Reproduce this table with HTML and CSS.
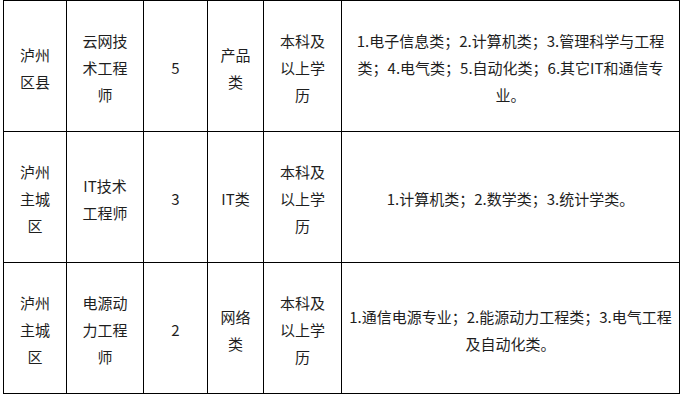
FILE: index.html
```html
<!DOCTYPE html>
<html lang="zh-CN">
<head>
<meta charset="utf-8">
<title>岗位表</title>
<link rel="stylesheet" href="styles.css">
</head>
<body>
<table class="jobs">
  <colgroup>
    <col class="c-area">
    <col class="c-post">
    <col class="c-num">
    <col class="c-type">
    <col class="c-edu">
    <col class="c-major">
  </colgroup>
  <tbody>
    <tr>
      <td class="narrow">泸州区县</td>
      <td class="wide">云网技术工程师</td>
      <td>5</td>
      <td class="narrow">产品类</td>
      <td class="wide">本科及以上学历</td>
      <td class="major">1.电子信息类；2.计算机类；3.管理科学与工程类；4.电气类；5.自动化类；6.其它IT和通信专业。</td>
    </tr>
    <tr>
      <td class="narrow">泸州主城区</td>
      <td class="wide">IT技术工程师</td>
      <td>3</td>
      <td class="narrow">IT类</td>
      <td class="wide">本科及以上学历</td>
      <td class="major">1.计算机类；2.数学类；3.统计学类。</td>
    </tr>
    <tr>
      <td class="narrow">泸州主城区</td>
      <td class="wide">电源动力工程师</td>
      <td>2</td>
      <td class="narrow">网络类</td>
      <td class="wide">本科及以上学历</td>
      <td class="major">1.通信电源专业；2.能源动力工程类；3.电气工程及自动化类。</td>
    </tr>
  </tbody>
</table>
</body>
</html>
```

FILE: styles.css
```css
html, body {
  margin: 0;
  padding: 0;
  background: #ffffff;
}

body {
  padding: 0 0 0 3px;
  font-family: "Noto Sans CJK SC", "Noto Sans", sans-serif;
  font-size: 15px;
  color: #1e1e1e;
}

.jobs {
  border-collapse: collapse;
  table-layout: fixed;
  width: 677px;
}

.c-area { width: 63px; }
.c-post { width: 77px; }
.c-num { width: 64px; }
.c-type { width: 56px; }
.c-edu { width: 78px; }
.c-major { width: 338px; }

.jobs td {
  border: 1px solid #000000;
  height: 131px;
  padding: 3px 12px 0;
  text-align: center;
  vertical-align: middle;
  line-height: 27px;
  box-sizing: border-box;
}

.jobs td.narrow {
  padding-left: 10px;
  padding-right: 10px;
}

.jobs td.major {
  padding-left: 5px;
  padding-right: 5px;
}
```
